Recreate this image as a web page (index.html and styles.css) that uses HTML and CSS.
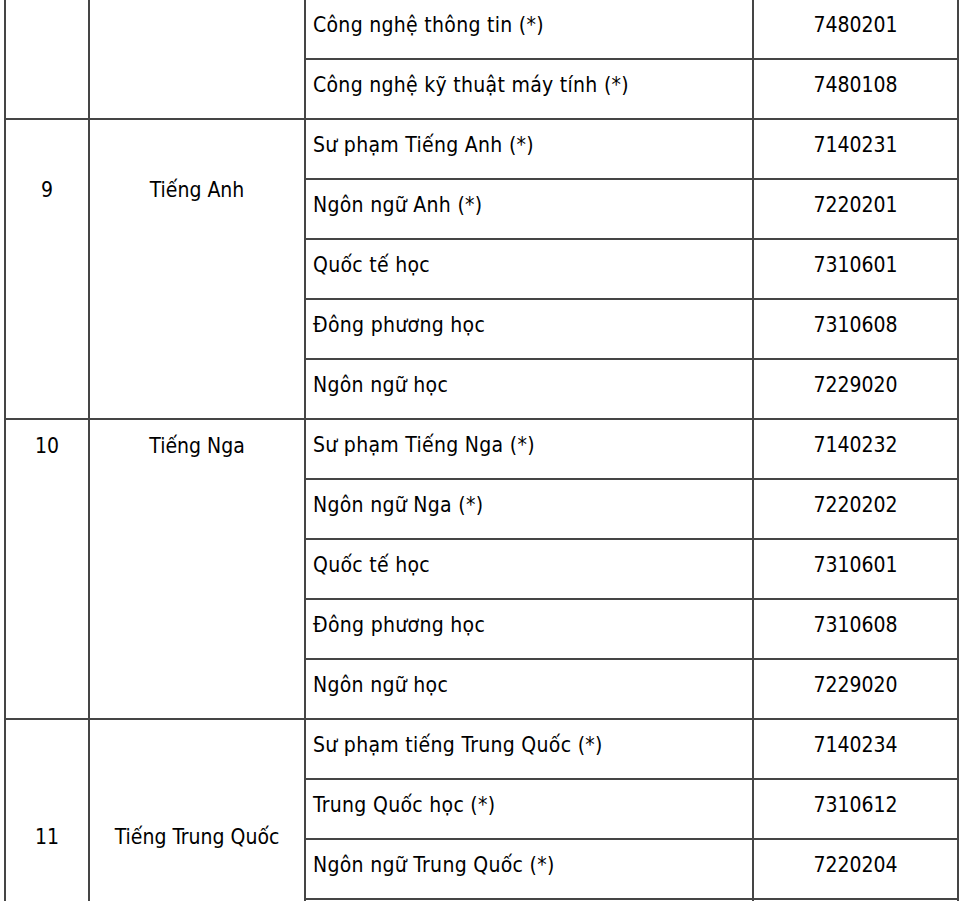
FILE: index.html
```html
<!DOCTYPE html>
<html lang="vi">
<head>
<meta charset="utf-8">
<title>Ngành đào tạo</title>
<link rel="stylesheet" href="styles.css">
</head>
<body>
<table class="grid">
  <colgroup>
    <col class="c-no">
    <col class="c-subject">
    <col class="c-major">
    <col class="c-code">
  </colgroup>
  <tbody>
    <tr>
      <td class="group" rowspan="2"></td>
      <td class="group" rowspan="2"></td>
      <td class="major">Công nghệ thông tin (*)</td>
      <td class="code">7480201</td>
    </tr>
    <tr>
      <td class="major">Công nghệ kỹ thuật máy tính (*)</td>
      <td class="code">7480108</td>
    </tr>

    <tr>
      <td class="group g9" rowspan="5">9</td>
      <td class="group g9" rowspan="5">Tiếng Anh</td>
      <td class="major">Sư phạm Tiếng Anh (*)</td>
      <td class="code">7140231</td>
    </tr>
    <tr>
      <td class="major">Ngôn ngữ Anh (*)</td>
      <td class="code">7220201</td>
    </tr>
    <tr>
      <td class="major">Quốc tế học</td>
      <td class="code">7310601</td>
    </tr>
    <tr>
      <td class="major">Đông phương học</td>
      <td class="code">7310608</td>
    </tr>
    <tr>
      <td class="major">Ngôn ngữ học</td>
      <td class="code">7229020</td>
    </tr>

    <tr>
      <td class="group g10" rowspan="5">10</td>
      <td class="group g10" rowspan="5">Tiếng Nga</td>
      <td class="major">Sư phạm Tiếng Nga (*)</td>
      <td class="code">7140232</td>
    </tr>
    <tr>
      <td class="major">Ngôn ngữ Nga (*)</td>
      <td class="code">7220202</td>
    </tr>
    <tr>
      <td class="major">Quốc tế học</td>
      <td class="code">7310601</td>
    </tr>
    <tr>
      <td class="major">Đông phương học</td>
      <td class="code">7310608</td>
    </tr>
    <tr>
      <td class="major">Ngôn ngữ học</td>
      <td class="code">7229020</td>
    </tr>

    <tr>
      <td class="group g11" rowspan="4">11</td>
      <td class="group g11" rowspan="4">Tiếng Trung Quốc</td>
      <td class="major">Sư phạm tiếng Trung Quốc (*)</td>
      <td class="code">7140234</td>
    </tr>
    <tr>
      <td class="major">Trung Quốc học (*)</td>
      <td class="code">7310612</td>
    </tr>
    <tr>
      <td class="major">Ngôn ngữ Trung Quốc (*)</td>
      <td class="code">7220204</td>
    </tr>
    <tr>
      <td class="major"></td>
      <td class="code"></td>
    </tr>
  </tbody>
</table>
</body>
</html>
```

FILE: styles.css
```css
html, body {
  margin: 0;
  padding: 0;
  background: #ffffff;
}

body {
  overflow: hidden;
}

.grid {
  border-collapse: collapse;
  table-layout: fixed;
  width: 953px;
  margin: -2px 0 0 4px;
  font-family: "DejaVu Sans Condensed", "DejaVu Sans", sans-serif;
  font-stretch: condensed;
  font-size: 21px;
  color: #000000;
}

.c-no { width: 84px; }
.c-subject { width: 216px; }
.c-major { width: 448px; }
.c-code { width: 205px; }

.grid td {
  border: 2px solid #454545;
  height: 60px;
  box-sizing: border-box;
  padding: 0;
  vertical-align: top;
  line-height: 30px;
}

.major {
  padding: 10px 6px 0 7px !important;
  text-align: left;
  letter-spacing: 0.3px;
}

.code {
  padding-top: 10px !important;
  text-align: center;
}

.group {
  text-align: center;
}

.g9 {
  padding-top: 55px !important;
}

.g10 {
  padding-top: 11px !important;
}

.g11 {
  padding-top: 102px !important;
}
```
